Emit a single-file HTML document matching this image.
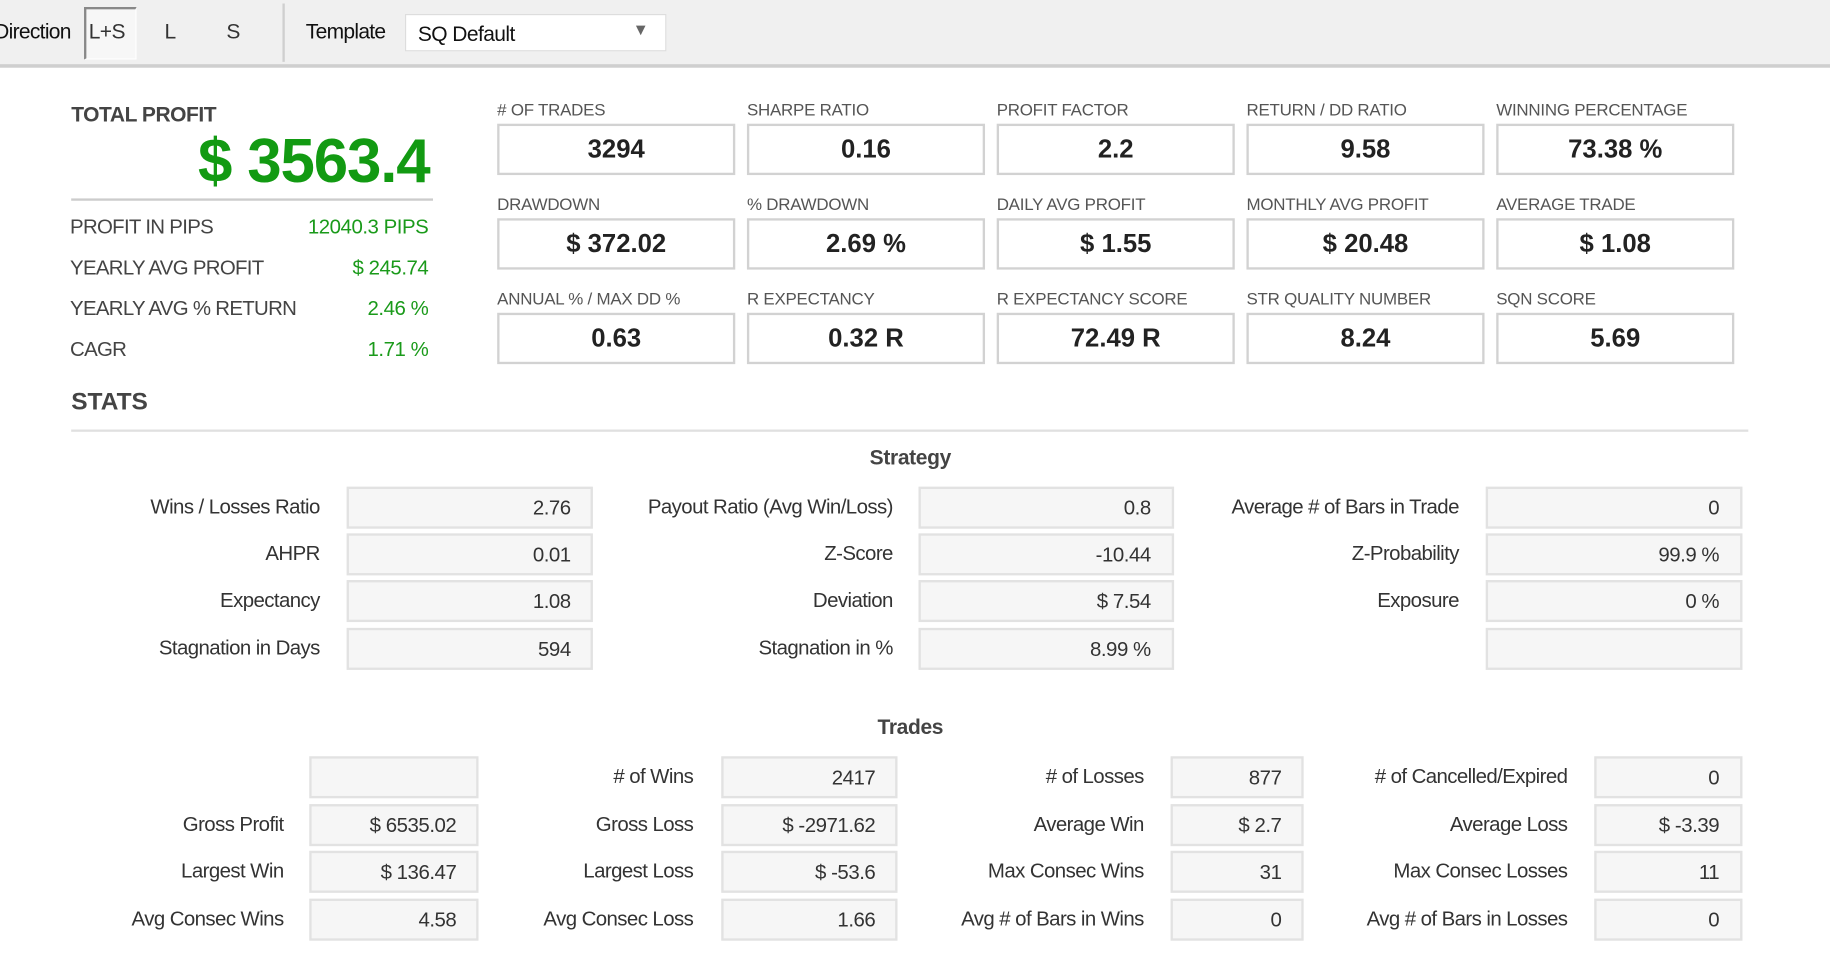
<!DOCTYPE html>
<html><head><meta charset="utf-8"><style>
html,body{margin:0;padding:0;width:1830px;height:971px;overflow:hidden;background:#fff}
#w{position:absolute;left:0;top:0;width:1568px;height:832px;transform:scale(1.16709);transform-origin:0 0;font-family:"Liberation Sans",Arial,sans-serif;color:#333}
.a{position:absolute;white-space:nowrap}
.tb{position:absolute;left:0;top:0;width:1568px;height:55px;background:#f0f0f0;border-bottom:3px solid #cfcfcf}
.ml{position:absolute;font-size:14.5px;color:#555;letter-spacing:-0.2px;white-space:nowrap}
.mb{position:absolute;width:204px;height:44px;box-sizing:border-box;border:2px solid #d2d2d2;background:#fff;text-align:center;line-height:40px;font-weight:bold;font-size:22px;color:#222}
.lb{position:absolute;text-align:right;font-size:17.5px;letter-spacing:-0.5px;color:#333;white-space:nowrap}
.bx{position:absolute;height:36px;box-sizing:border-box;border:2px solid #e2e2e2;background:#f6f6f6;text-align:right;line-height:32px;font-size:17.5px;letter-spacing:-0.4px;color:#333}
.lr{position:absolute;left:60px;font-size:17.5px;letter-spacing:-0.6px;color:#444;white-space:nowrap}
.lv{position:absolute;right:1201px;font-size:17.5px;letter-spacing:-0.4px;color:#1a9a1a;text-align:right;white-space:nowrap}
</style></head><body><div id="w">
<div class="tb"></div>
<div class="a" style="left:-5px;top:17px;font-size:18px;letter-spacing:-0.6px;color:#111">Direction</div>
<div class="a" style="left:72px;top:6px;width:42px;height:42px;background:#f7f7f7;border-left:2px solid #888;border-top:2px solid #888;border-right:1px solid #fff;border-bottom:1px solid #fff"></div>
<div class="a" style="left:76px;top:17px;font-size:18px;letter-spacing:-0.5px;color:#333">L+S</div>
<div class="a" style="left:141px;top:17px;font-size:18px;color:#333">L</div>
<div class="a" style="left:194px;top:17px;font-size:18px;color:#333">S</div>
<div class="a" style="left:242px;top:3px;width:2px;height:50px;background:#cfcfcf"></div>
<div class="a" style="left:262px;top:17px;font-size:18px;letter-spacing:-0.6px;color:#111">Template</div>
<div class="a" style="left:347px;top:12px;width:222px;height:30px;background:#fff;border:1px solid #ddd"></div>
<div class="a" style="left:358px;top:19px;font-size:18px;letter-spacing:-0.5px;color:#111">SQ Default</div>
<div class="a" style="left:542px;top:17px;font-size:14px;color:#666">▼</div>

<div class="a" style="left:61px;top:88px;font-size:18px;letter-spacing:-0.4px;font-weight:bold;color:#444">TOTAL PROFIT</div>
<div class="a" style="right:1200px;top:108px;font-size:53px;letter-spacing:-1px;font-weight:bold;color:#129a12">$ 3563.4</div>
<div class="a" style="left:61px;top:170px;width:310px;height:2px;background:#ccc"></div>
<div class="lr" style="top:184px">PROFIT IN PIPS</div><div class="lv" style="top:184px">12040.3 PIPS</div>
<div class="lr" style="top:219px">YEARLY AVG PROFIT</div><div class="lv" style="top:219px">$ 245.74</div>
<div class="lr" style="top:254px">YEARLY AVG % RETURN</div><div class="lv" style="top:254px">2.46 %</div>
<div class="lr" style="top:289px">CAGR</div><div class="lv" style="top:289px">1.71 %</div>

<div class="ml" style="left:426px;top:87px">#&nbsp;OF TRADES</div><div class="mb" style="left:426px;top:106px">3294</div>
<div class="ml" style="left:640px;top:87px">SHARPE RATIO</div><div class="mb" style="left:640px;top:106px">0.16</div>
<div class="ml" style="left:854px;top:87px">PROFIT FACTOR</div><div class="mb" style="left:854px;top:106px">2.2</div>
<div class="ml" style="left:1068px;top:87px">RETURN / DD RATIO</div><div class="mb" style="left:1068px;top:106px">9.58</div>
<div class="ml" style="left:1282px;top:87px">WINNING PERCENTAGE</div><div class="mb" style="left:1282px;top:106px">73.38 %</div>
<div class="ml" style="left:426px;top:168px">DRAWDOWN</div><div class="mb" style="left:426px;top:187px">$ 372.02</div>
<div class="ml" style="left:640px;top:168px">% DRAWDOWN</div><div class="mb" style="left:640px;top:187px">2.69 %</div>
<div class="ml" style="left:854px;top:168px">DAILY AVG PROFIT</div><div class="mb" style="left:854px;top:187px">$ 1.55</div>
<div class="ml" style="left:1068px;top:168px">MONTHLY AVG PROFIT</div><div class="mb" style="left:1068px;top:187px">$ 20.48</div>
<div class="ml" style="left:1282px;top:168px">AVERAGE TRADE</div><div class="mb" style="left:1282px;top:187px">$ 1.08</div>
<div class="ml" style="left:426px;top:249px">ANNUAL % / MAX DD %</div><div class="mb" style="left:426px;top:268px">0.63</div>
<div class="ml" style="left:640px;top:249px">R EXPECTANCY</div><div class="mb" style="left:640px;top:268px">0.32 R</div>
<div class="ml" style="left:854px;top:249px">R EXPECTANCY SCORE</div><div class="mb" style="left:854px;top:268px">72.49 R</div>
<div class="ml" style="left:1068px;top:249px">STR QUALITY NUMBER</div><div class="mb" style="left:1068px;top:268px">8.24</div>
<div class="ml" style="left:1282px;top:249px">SQN SCORE</div><div class="mb" style="left:1282px;top:268px">5.69</div>

<div class="a" style="left:61px;top:333px;font-size:21px;font-weight:bold;color:#444">STATS</div>
<div class="a" style="left:61px;top:368px;width:1437px;height:2px;background:#e0e0e0"></div>
<div class="a" style="left:680px;top:382px;width:200px;text-align:center;font-size:18px;letter-spacing:-0.3px;font-weight:bold;color:#444">Strategy</div>

<div class="lb" style="right:1294px;top:424px">Wins / Losses Ratio</div><div class="bx" style="left:297px;width:211px;padding-right:17px;top:417px">2.76</div>
<div class="lb" style="right:1294px;top:464px">AHPR</div><div class="bx" style="left:297px;width:211px;padding-right:17px;top:457px">0.01</div>
<div class="lb" style="right:1294px;top:504px">Expectancy</div><div class="bx" style="left:297px;width:211px;padding-right:17px;top:497px">1.08</div>
<div class="lb" style="right:1294px;top:545px">Stagnation in Days</div><div class="bx" style="left:297px;width:211px;padding-right:17px;top:538px">594</div>

<div class="lb" style="right:803px;top:424px">Payout Ratio (Avg Win/Loss)</div><div class="bx" style="left:787px;width:219px;padding-right:18px;top:417px">0.8</div>
<div class="lb" style="right:803px;top:464px">Z-Score</div><div class="bx" style="left:787px;width:219px;padding-right:18px;top:457px">-10.44</div>
<div class="lb" style="right:803px;top:504px">Deviation</div><div class="bx" style="left:787px;width:219px;padding-right:18px;top:497px">$ 7.54</div>
<div class="lb" style="right:803px;top:545px">Stagnation in %</div><div class="bx" style="left:787px;width:219px;padding-right:18px;top:538px">8.99 %</div>

<div class="lb" style="right:318px;top:424px">Average # of Bars in Trade</div><div class="bx" style="left:1273px;width:220px;padding-right:18px;top:417px">0</div>
<div class="lb" style="right:318px;top:464px">Z-Probability</div><div class="bx" style="left:1273px;width:220px;padding-right:18px;top:457px">99.9 %</div>
<div class="lb" style="right:318px;top:504px">Exposure</div><div class="bx" style="left:1273px;width:220px;padding-right:18px;top:497px">0 %</div>
<div class="bx" style="left:1273px;width:220px;top:538px"></div>

<div class="a" style="left:680px;top:613px;width:200px;text-align:center;font-size:18px;letter-spacing:-0.3px;font-weight:bold;color:#444">Trades</div>

<div class="bx" style="left:265px;width:145px;top:648px"></div>
<div class="lb" style="right:1325px;top:696px">Gross Profit</div><div class="bx" style="left:265px;width:145px;padding-right:17px;top:689px">$ 6535.02</div>
<div class="lb" style="right:1325px;top:736px">Largest Win</div><div class="bx" style="left:265px;width:145px;padding-right:17px;top:729px">$ 136.47</div>
<div class="lb" style="right:1325px;top:777px">Avg Consec Wins</div><div class="bx" style="left:265px;width:145px;padding-right:17px;top:770px">4.58</div>

<div class="lb" style="right:974px;top:655px"># of Wins</div><div class="bx" style="left:618px;width:151px;padding-right:17px;top:648px">2417</div>
<div class="lb" style="right:974px;top:696px">Gross Loss</div><div class="bx" style="left:618px;width:151px;padding-right:17px;top:689px">$ -2971.62</div>
<div class="lb" style="right:974px;top:736px">Largest Loss</div><div class="bx" style="left:618px;width:151px;padding-right:17px;top:729px">$ -53.6</div>
<div class="lb" style="right:974px;top:777px">Avg Consec Loss</div><div class="bx" style="left:618px;width:151px;padding-right:17px;top:770px">1.66</div>

<div class="lb" style="right:588px;top:655px"># of Losses</div><div class="bx" style="left:1003px;width:114px;padding-right:17px;top:648px">877</div>
<div class="lb" style="right:588px;top:696px">Average Win</div><div class="bx" style="left:1003px;width:114px;padding-right:17px;top:689px">$ 2.7</div>
<div class="lb" style="right:588px;top:736px">Max Consec Wins</div><div class="bx" style="left:1003px;width:114px;padding-right:17px;top:729px">31</div>
<div class="lb" style="right:588px;top:777px">Avg # of Bars in Wins</div><div class="bx" style="left:1003px;width:114px;padding-right:17px;top:770px">0</div>

<div class="lb" style="right:225px;top:655px"># of Cancelled/Expired</div><div class="bx" style="left:1366px;width:127px;padding-right:18px;top:648px">0</div>
<div class="lb" style="right:225px;top:696px">Average Loss</div><div class="bx" style="left:1366px;width:127px;padding-right:18px;top:689px">$ -3.39</div>
<div class="lb" style="right:225px;top:736px">Max Consec Losses</div><div class="bx" style="left:1366px;width:127px;padding-right:18px;top:729px">11</div>
<div class="lb" style="right:225px;top:777px">Avg # of Bars in Losses</div><div class="bx" style="left:1366px;width:127px;padding-right:18px;top:770px">0</div>
</div></body></html>
